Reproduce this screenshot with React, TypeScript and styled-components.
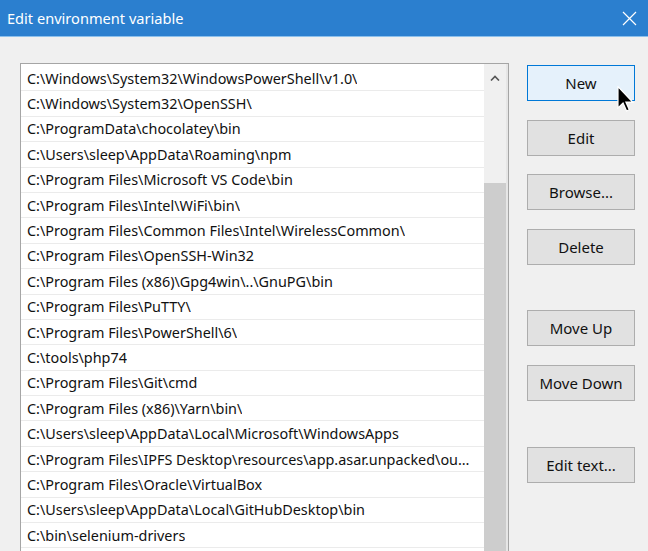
import React from 'react';
import styled, {createGlobalStyle} from "styled-components";

const GlobalStyle = createGlobalStyle`
  html, body {
    margin: 0;
    padding: 0;
    background: #f0f0f0;
    overflow: hidden;
  }
`

const paths = [
  'C:\\Windows\\System32\\WindowsPowerShell\\v1.0\\',
  'C:\\Windows\\System32\\OpenSSH\\',
  'C:\\ProgramData\\chocolatey\\bin',
  'C:\\Users\\sleep\\AppData\\Roaming\\npm',
  'C:\\Program Files\\Microsoft VS Code\\bin',
  'C:\\Program Files\\Intel\\WiFi\\bin\\',
  'C:\\Program Files\\Common Files\\Intel\\WirelessCommon\\',
  'C:\\Program Files\\OpenSSH-Win32',
  'C:\\Program Files (x86)\\Gpg4win\\..\\GnuPG\\bin',
  'C:\\Program Files\\PuTTY\\',
  'C:\\Program Files\\PowerShell\\6\\',
  'C:\\tools\\php74',
  'C:\\Program Files\\Git\\cmd',
  'C:\\Program Files (x86)\\Yarn\\bin\\',
  'C:\\Users\\sleep\\AppData\\Local\\Microsoft\\WindowsApps',
  'C:\\Program Files\\IPFS Desktop\\resources\\app.asar.unpacked\\out\\bin',
  'C:\\Program Files\\Oracle\\VirtualBox',
  'C:\\Users\\sleep\\AppData\\Local\\GitHubDesktop\\bin',
  'C:\\bin\\selenium-drivers',
]

const StyledWindow = styled.div`
  position: relative;
  width: 648px;
  height: 551px;
  display: flex;
  flex-direction: column;
  background: #f0f0f0;
  font-family: "Noto Sans", "Open Sans", sans-serif;
  overflow: hidden;
`

const TitleBar = styled.div`
  height: 37px;
  flex-shrink: 0;
  background: #2b7fcf;
  border-bottom: 1px solid #8cc0ec;
  box-sizing: border-box;
  display: flex;
  align-items: center;
  justify-content: space-between;
  padding: 0 11px 0 7px;
  color: #fff;
  font-size: 14.6px;
`

const CloseIcon = styled.svg`
  width: 15px;
  height: 15px;
  display: block;
`

const Content = styled.div`
  display: flex;
  align-items: flex-start;
  padding: 26px 0 0 20px;
`

const ListBox = styled.div`
  width: 489px;
  height: 520px;
  flex-shrink: 0;
  box-sizing: border-box;
  border: 1px solid #a5a5a5;
  background: #fff;
  display: flex;
`

const Rows = styled.div`
  flex: 1;
  min-width: 0;
  padding-top: 2px;
`

const Row = styled.div`
  height: 25.4px;
  box-sizing: border-box;
  border-bottom: 1px solid #ebebeb;
  padding-left: 6px;
  padding-right: 12px;
  display: flex;
  align-items: center;
  font-size: 14.4px;
  color: #111;
  white-space: nowrap;
  overflow: hidden;

  span {
    overflow: hidden;
    text-overflow: ellipsis;
  }
`

const ScrollBar = styled.div`
  width: 22px;
  flex-shrink: 0;
  background: #f0f0f0;
  border-right: 2px solid #e6e6e6;
  display: flex;
  flex-direction: column;
`

const ScrollArrow = styled.div`
  height: 28px;
  display: flex;
  align-items: center;
  justify-content: center;
`

const ScrollTrack = styled.div`
  height: 91px;
`

const ScrollThumb = styled.div`
  flex: 1;
  background: #cdcdcd;
`

const ButtonStack = styled.div`
  margin: 2px 0 0 18px;
  display: flex;
  flex-direction: column;
  gap: 18.6px;
`

const Button = styled.div<{ $primary?: boolean; $extra?: number }>`
  width: 108px;
  height: 36px;
  box-sizing: border-box;
  margin-top: ${p => p.$extra || 0}px;
  display: flex;
  align-items: center;
  justify-content: center;
  font-size: 15px;
  color: #111;
  background: ${p => p.$primary ? '#e5f1fb' : '#e1e1e1'};
  border: 1px solid ${p => p.$primary ? '#0078d7' : '#adadad'};
`

const Cursor = styled.svg`
  position: absolute;
  left: 617px;
  top: 86px;
  width: 17px;
  height: 26px;
`

const App: React.FC = () => {
  return (
    <>
      <GlobalStyle/>
      <StyledWindow>
        <TitleBar>
          <span>Edit environment variable</span>
          <CloseIcon viewBox="0 0 15 15">
            <path d="M1 1 L14 14 M14 1 L1 14" stroke="#fff" strokeWidth="1.2" fill="none"/>
          </CloseIcon>
        </TitleBar>
        <Content>
          <ListBox>
            <Rows>
              {paths.map(p => (
                <Row key={p}><span>{p}</span></Row>
              ))}
            </Rows>
            <ScrollBar>
              <ScrollArrow>
                <svg width="10" height="6" viewBox="0 0 10 6">
                  <path d="M1 5.5 L5 1.5 L9 5.5" stroke="#555" strokeWidth="1.6" fill="none"/>
                </svg>
              </ScrollArrow>
              <ScrollTrack/>
              <ScrollThumb/>
            </ScrollBar>
          </ListBox>
          <ButtonStack>
            <Button $primary>New</Button>
            <Button>Edit</Button>
            <Button>Browse...</Button>
            <Button>Delete</Button>
            <Button $extra={27}>Move Up</Button>
            <Button>Move Down</Button>
            <Button $extra={27}>Edit text...</Button>
          </ButtonStack>
        </Content>
        <Cursor viewBox="0 0 12 19">
          <path d="M0.5 0.5 L0.5 16 L4.2 12.5 L6.8 18.3 L8.8 17.4 L6.3 11.7 L11.2 11.7 Z"
                fill="#000" stroke="#fff" strokeWidth="0.9" strokeLinejoin="miter"/>
        </Cursor>
      </StyledWindow>
    </>
  );
};

export default App;
